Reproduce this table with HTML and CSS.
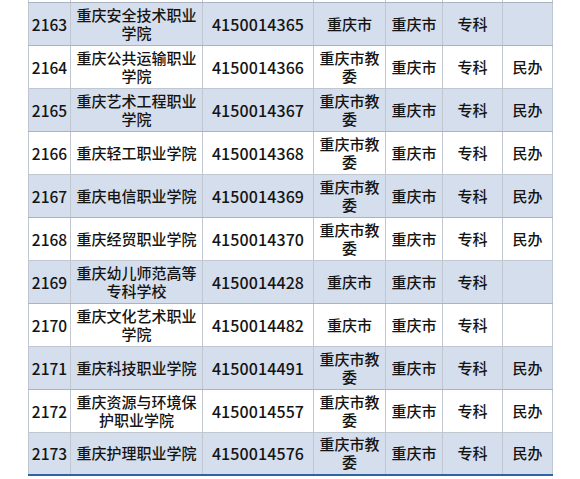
FILE: index.html
```html
<!DOCTYPE html>
<html lang="zh">
<head>
<meta charset="utf-8">
<link rel="stylesheet" href="styles.css">
</head>
<body>
<div class="sheet">
<table class="grid">
<colgroup>
<col class="c1"><col class="c2"><col class="c3"><col class="c4"><col class="c5"><col class="c6"><col class="c7">
</colgroup>
<tbody>
<tr class="stub"><td></td><td></td><td></td><td></td><td></td><td></td><td></td></tr>
<tr class="alt"><td class="no">2163</td><td class="name">重庆安全技术职业学院</td><td class="code">4150014365</td><td>重庆市</td><td>重庆市</td><td>专科</td><td></td></tr>
<tr><td class="no">2164</td><td class="name">重庆公共运输职业学院</td><td class="code">4150014366</td><td class="dept">重庆市教委</td><td>重庆市</td><td>专科</td><td>民办</td></tr>
<tr class="alt"><td class="no">2165</td><td class="name">重庆艺术工程职业学院</td><td class="code">4150014367</td><td class="dept">重庆市教委</td><td>重庆市</td><td>专科</td><td>民办</td></tr>
<tr><td class="no">2166</td><td class="name">重庆轻工职业学院</td><td class="code">4150014368</td><td class="dept">重庆市教委</td><td>重庆市</td><td>专科</td><td>民办</td></tr>
<tr class="alt"><td class="no">2167</td><td class="name">重庆电信职业学院</td><td class="code">4150014369</td><td class="dept">重庆市教委</td><td>重庆市</td><td>专科</td><td>民办</td></tr>
<tr><td class="no">2168</td><td class="name">重庆经贸职业学院</td><td class="code">4150014370</td><td class="dept">重庆市教委</td><td>重庆市</td><td>专科</td><td>民办</td></tr>
<tr class="alt"><td class="no">2169</td><td class="name">重庆幼儿师范高等专科学校</td><td class="code">4150014428</td><td>重庆市</td><td>重庆市</td><td>专科</td><td></td></tr>
<tr><td class="no">2170</td><td class="name">重庆文化艺术职业学院</td><td class="code">4150014482</td><td>重庆市</td><td>重庆市</td><td>专科</td><td></td></tr>
<tr class="alt"><td class="no">2171</td><td class="name">重庆科技职业学院</td><td class="code">4150014491</td><td class="dept">重庆市教委</td><td>重庆市</td><td>专科</td><td>民办</td></tr>
<tr><td class="no">2172</td><td class="name">重庆资源与环境保护职业学院</td><td class="code">4150014557</td><td class="dept">重庆市教委</td><td>重庆市</td><td>专科</td><td>民办</td></tr>
<tr class="alt last"><td class="no">2173</td><td class="name">重庆护理职业学院</td><td class="code">4150014576</td><td class="dept">重庆市教委</td><td>重庆市</td><td>专科</td><td>民办</td></tr>
</tbody>
</table>
</div>
</body>
</html>
```
FILE: styles.css
```css
html, body {
  margin: 0;
  padding: 0;
  background: #ffffff;
}
body {
  width: 580px;
  height: 479px;
  overflow: hidden;
  font-family: "Noto Sans CJK SC", "Noto Sans", sans-serif;
  color: #141414;
}
.sheet {
  padding-left: 28px;
}
.grid {
  border-collapse: collapse;
  table-layout: fixed;
  width: 524px;
}
.c1 { width: 42px; }
.c2 { width: 132px; }
.c3 { width: 111px; }
.c4 { width: 72px; }
.c5 { width: 57px; }
.c6 { width: 60px; }
.c7 { width: 50px; }
.grid td {
  height: 43px;
  padding: 0 1px;
  box-sizing: border-box;
  border: 1px solid #c1c7d1;
  text-align: center;
  vertical-align: middle;
  font-size: 15px;
  font-weight: 500;
  line-height: 18px;
  overflow: hidden;
}
.grid tr.stub td {
  height: 2px;
  padding: 0;
  border-top: none;
  border-bottom: 1px solid #aab3c2;
  line-height: 0;
}
.grid tr.alt td {
  background: #d5deec;
  border-top-color: #aab3c2;
  border-bottom-color: #aab3c2;
}
.grid tr.last td {
  border-bottom: 2px solid #2f63a8;
}
.grid td.no {
  padding: 0;
  font-size: 15.5px;
}
.grid td.name {
  padding: 0 4px;
}
.grid td.code {
  font-size: 16px;
  letter-spacing: 0.1px;
}
```
